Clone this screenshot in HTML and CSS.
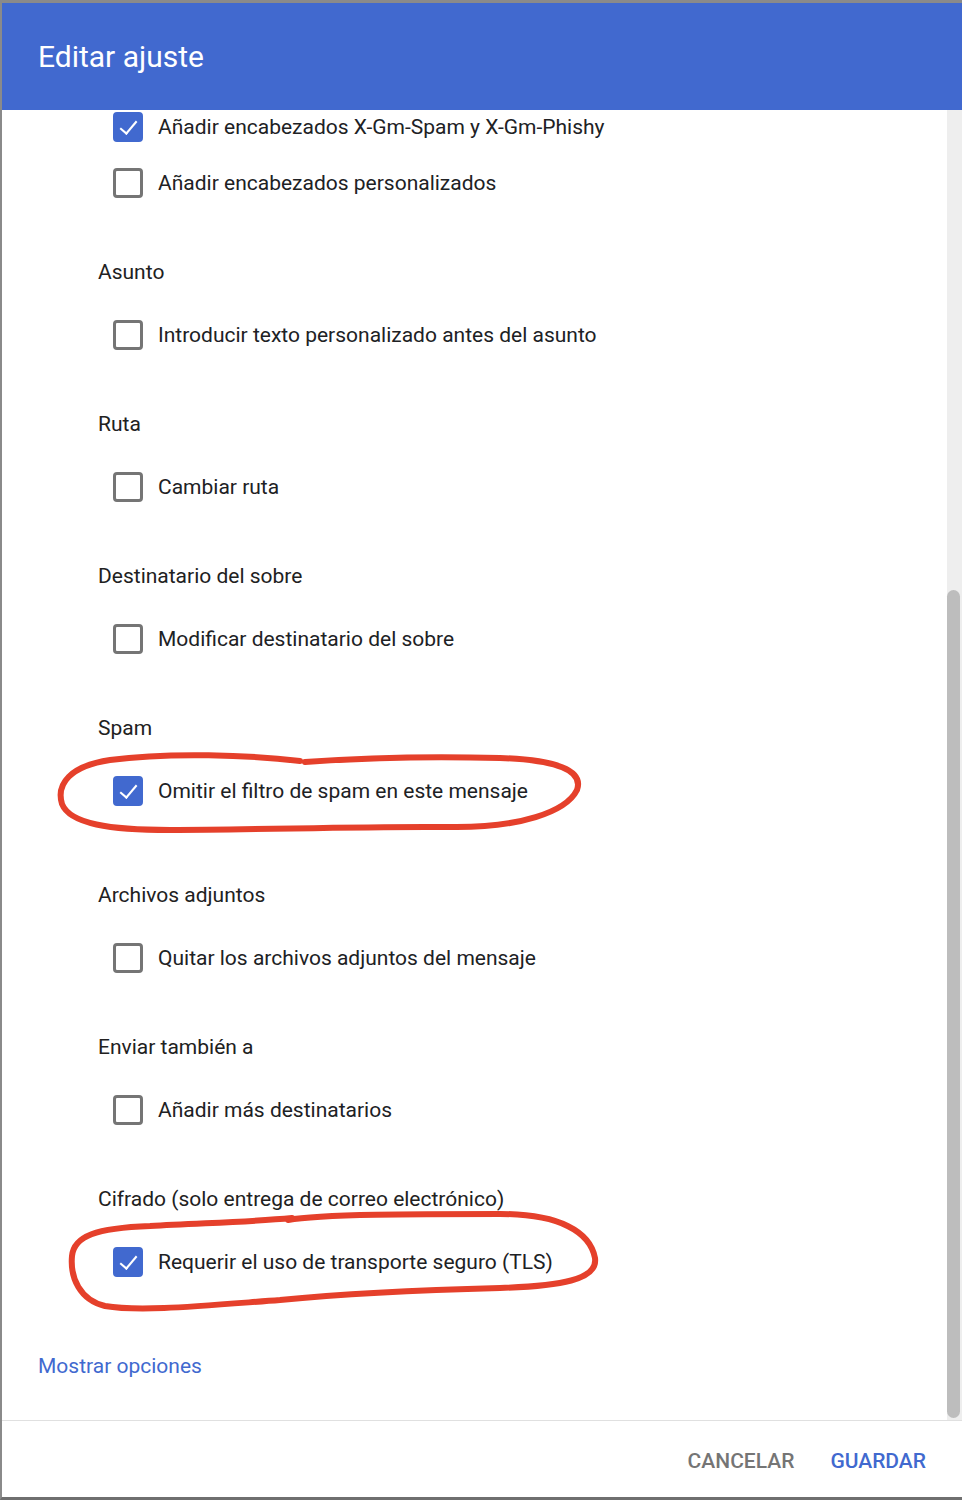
FILE: index.html
```html
<!DOCTYPE html>
<html lang="es">
<head>
    <meta charset="UTF-8" />
    <meta name="viewport" content="width=device-width, initial-scale=1" />
    <title>Editar ajuste</title>
    <link rel="stylesheet" href="styles.css">
</head>
<body>
<div class="dialog">
    <div class="dialog-header">
        <h1>Editar ajuste</h1>
    </div>

    <div class="dialog-body">
        <div class="content">
            <div class="options-list first">
                <label class="option"><span class="box checked"></span>Añadir encabezados X-Gm-Spam y X-Gm-Phishy</label>
                <label class="option"><span class="box"></span>Añadir encabezados personalizados</label>
            </div>

            <div class="section">
                <div class="section-title">Asunto</div>
                <label class="option"><span class="box"></span>Introducir texto personalizado antes del asunto</label>
            </div>

            <div class="section">
                <div class="section-title">Ruta</div>
                <label class="option"><span class="box"></span>Cambiar ruta</label>
            </div>

            <div class="section">
                <div class="section-title">Destinatario del sobre</div>
                <label class="option"><span class="box"></span>Modificar destinatario del sobre</label>
            </div>

            <div class="section spaced">
                <div class="section-title">Spam</div>
                <label class="option"><span class="box checked"></span>Omitir el filtro de spam en este mensaje</label>
            </div>

            <div class="section">
                <div class="section-title">Archivos adjuntos</div>
                <label class="option"><span class="box"></span>Quitar los archivos adjuntos del mensaje</label>
            </div>

            <div class="section">
                <div class="section-title">Enviar también a</div>
                <label class="option"><span class="box"></span>Añadir más destinatarios</label>
            </div>

            <div class="section">
                <div class="section-title">Cifrado (solo entrega de correo electrónico)</div>
                <label class="option"><span class="box checked"></span>Requerir el uso de transporte seguro (TLS)</label>
            </div>

            <a class="more-link" href="#">Mostrar opciones</a>
        </div>
        <div class="scroll-track"><div class="scroll-thumb"></div></div>
    </div>

    <div class="dialog-footer">
        <button class="btn cancel">Cancelar</button>
        <button class="btn save">Guardar</button>
    </div>

    <!-- hand-drawn marks on top of the screenshot -->
    <svg class="marks" width="962" height="1500" viewBox="0 0 962 1500">
        <path d="M300 761 C250 755 170 752 110 760 C70 766 56 784 62 804 C70 824 110 830 170 830 C260 830 360 826 450 827 C520 828 566 812 577 790 C584 770 556 760 500 758 C430 756 360 758 305 762"/>
        <path d="M288 1220 C320 1214 420 1214 500 1214 C560 1214 590 1232 595 1258 C598 1280 560 1286 500 1288 C420 1290 340 1294 280 1300 C200 1306 140 1312 105 1306 C80 1300 70 1278 72 1256 C74 1236 96 1228 150 1226 C200 1223 250 1222 292 1218"/>
    </svg>
</div>
</body>
</html>
```

FILE: styles.css
```css
html, body {
    margin: 0;
    padding: 0;
}
body {
    font-family: Roboto, "Noto Sans", Arial, sans-serif;
    background-color: #808080;
}
.dialog {
    position: relative;
    height: 1500px;
    box-sizing: border-box;
    border-top: 3px solid #8a8a8a;
    border-left: 2px solid #8a8a8a;
    border-bottom: 3px solid #6f6f6f;
    background-color: white;
    display: flex;
    flex-direction: column;
    overflow: hidden;
}
.dialog-header {
    height: 107px;
    flex: none;
    background-color: #4169cf;
    display: flex;
    align-items: center;
    padding-left: 36px;
}
.dialog-header h1 {
    margin: 0;
    color: white;
    font-size: 30px;
    font-weight: 400;
}
.dialog-body {
    flex: 1;
    display: flex;
    overflow: hidden;
}
.content {
    flex: 1;
    padding-bottom: 42px;
}
.options-list.first {
    margin-top: -11px;
}
.section {
    padding-top: 49px;
}
.section.spaced + .section {
    padding-top: 64px;
}
.section-title {
    padding-left: 96px;
    font-size: 21px;
    line-height: 24px;
    color: #212121;
    margin-bottom: 23px;
}
.option {
    height: 56px;
    display: flex;
    align-items: center;
    padding-left: 111px;
    font-size: 21px;
    color: #202124;
}
.box {
    width: 30px;
    height: 30px;
    box-sizing: border-box;
    border: 3px solid #757575;
    border-radius: 4px;
    margin-right: 15px;
    flex: none;
    position: relative;
}
.box.checked {
    background-color: #4169cf;
    border-color: #4169cf;
}
.box.checked::after {
    content: "";
    position: absolute;
    left: 8px;
    top: 2px;
    width: 7px;
    height: 15px;
    border-right: 2px solid white;
    border-bottom: 2px solid white;
    transform: rotate(40deg);
}
.more-link {
    display: block;
    margin-top: 64px;
    padding-left: 36px;
    font-size: 21px;
    line-height: 24px;
    color: #4169cf;
    text-decoration: none;
}
.scroll-track {
    width: 15px;
    flex: none;
    background-color: #eeeeee;
    display: flex;
    flex-direction: column;
}
.scroll-thumb {
    margin-top: 480px;
    flex: 1;
    margin-bottom: 2px;
    margin-right: 2px;
    background-color: #bdbdbd;
    border-radius: 7px;
}
.dialog-footer {
    height: 76px;
    flex: none;
    border-top: 1px solid #e0e0e0;
    display: flex;
    justify-content: flex-end;
    align-items: center;
    padding-right: 26px;
    gap: 16px;
}
.btn {
    background: none;
    border: none;
    font-family: Roboto, Arial, sans-serif;
    font-size: 21px;
    font-weight: 500;
    text-transform: uppercase;
    padding: 8px 10px;
    margin-top: 4px;
    cursor: pointer;
}
.btn.cancel {
    color: #757575;
}
.btn.save {
    color: #4169cf;
}
.marks {
    position: absolute;
    left: -2px;
    top: -3px;
    pointer-events: none;
}
.marks path {
    fill: none;
    stroke: #e5402b;
    stroke-width: 6;
    stroke-linecap: round;
    stroke-linejoin: round;
}
```
